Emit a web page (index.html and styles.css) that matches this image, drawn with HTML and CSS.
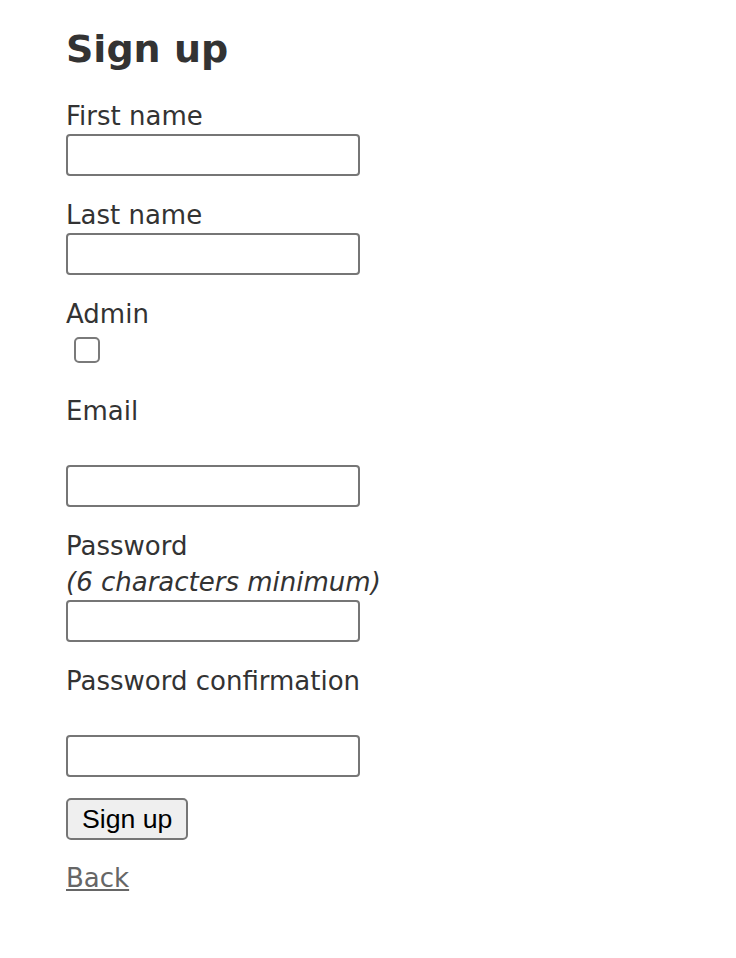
FILE: index.html
```html
<!DOCTYPE html>
<html lang="en">
<head>
<meta charset="utf-8">
<title>Sign up</title>
<link rel="stylesheet" href="styles.css">
</head>
<body>
<h1 class="title">Sign up</h1>
<form class="form" action="#" onsubmit="return false">
  <div class="field">
    <label class="label" for="first_name">First name</label>
    <input class="text-input" type="text" id="first_name">
  </div>
  <div class="field">
    <label class="label" for="last_name">Last name</label>
    <input class="text-input" type="text" id="last_name">
  </div>
  <div class="field field-check">
    <label class="label" for="admin">Admin</label>
    <div class="check-row"><input class="check" type="checkbox" id="admin"></div>
  </div>
  <div class="field">
    <label class="label" for="email">Email</label><br>
    <input class="text-input" type="email" id="email">
  </div>
  <div class="field">
    <label class="label" for="password">Password</label>
    <em class="hint">(6 characters minimum)</em><br>
    <input class="text-input" type="password" id="password">
  </div>
  <div class="field">
    <label class="label" for="password_confirmation">Password confirmation</label><br>
    <input class="text-input" type="password" id="password_confirmation">
  </div>
  <div class="actions">
    <input class="button" type="submit" value="Sign up">
  </div>
</form>
<a class="back" href="#">Back</a>
</body>
</html>
```

FILE: styles.css
```css
html, body {
  background: #fff;
}

body {
  margin: 0;
  padding: 0 66px;
  color: #333;
  font-family: "DejaVu Sans", Verdana, sans-serif;
  font-size: 26px;
  line-height: 36px;
}

.title {
  margin: 27px 0 27px;
  font-size: 38px;
  line-height: 44px;
  font-weight: bold;
  color: #333;
}

.form {
  margin: 0;
}

.field {
  margin-bottom: 21px;
}

.label {
  display: block;
  height: 36px;
}

.hint {
  font-style: italic;
}

.text-input {
  display: block;
  box-sizing: border-box;
  width: 294px;
  height: 42px;
  margin: 0;
  padding: 2px 4px;
  border: 2px solid #767676;
  border-radius: 4px;
  background: #fff;
  font-family: "Liberation Sans", Arial, sans-serif;
  font-size: 26px;
  outline: none;
}

.check-row {
  box-sizing: border-box;
  height: 40px;
  padding-top: 5px;
}

.check {
  -webkit-appearance: none;
  appearance: none;
  display: block;
  box-sizing: border-box;
  width: 26px;
  height: 26px;
  margin: 0 0 0 8px;
  border: 2px solid #7a7a7a;
  border-radius: 5px;
  background: #fff;
}

.actions {
  margin-bottom: 20px;
}

.button {
  -webkit-appearance: none;
  appearance: none;
  display: block;
  box-sizing: border-box;
  height: 42px;
  margin: 0;
  padding: 0 14px;
  border: 2px solid #767676;
  border-radius: 5px;
  background: #efefef;
  color: #000;
  font-family: "Liberation Sans", Arial, sans-serif;
  font-size: 26.67px;
  line-height: 38px;
}

.back {
  display: inline-block;
  color: #666;
  text-decoration: underline;
}
```
